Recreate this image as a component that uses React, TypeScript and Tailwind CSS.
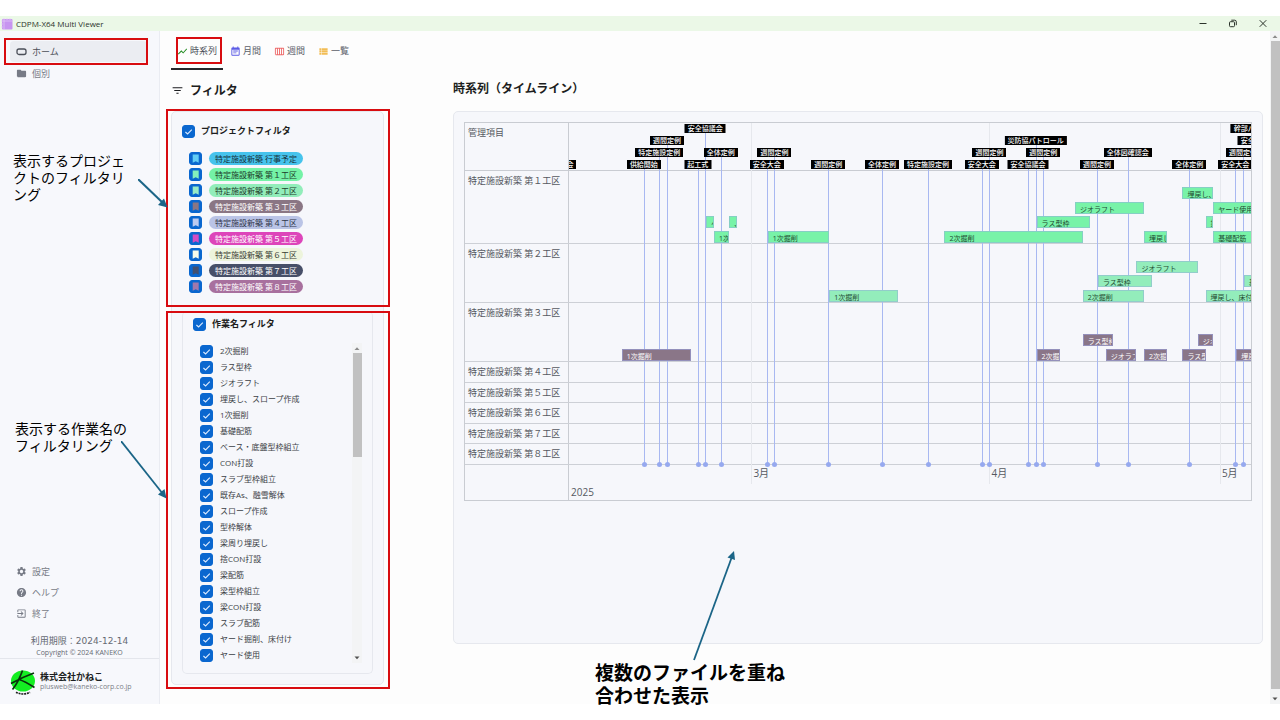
import { useState } from 'react';
import type { ReactNode } from 'react';
import {
  MdCalendarViewWeek,
  MdEventNote,
  MdExitToApp,
  MdFilterList,
  MdFolder,
  MdHelp,
  MdSettings,
  MdShowChart,
  MdViewList,
} from 'react-icons/md';

// Time axis, in days relative to March 1st
const AXIS_START = -23.75;
const AXIS_DAYS = 88.8;
const toPercent = (day: number) => ((day - AXIS_START) / AXIS_DAYS) * 100;

const projects = [
  { name: '特定施設新築 行事予定', chip: 'bg-[#46c3ec] text-[#17323c]', mark: 'text-[#62cdf5]' },
  { name: '特定施設新築 第１工区', chip: 'bg-[#74f2a6] text-[#1d3b2a]', mark: 'text-[#84f0bc]' },
  { name: '特定施設新築 第２工区', chip: 'bg-[#92edba] text-[#1d3b2a]', mark: 'text-[#98ebc6]' },
  { name: '特定施設新築 第３工区', chip: 'bg-[#8a7684] text-white', mark: 'text-[#8a7684]' },
  { name: '特定施設新築 第４工区', chip: 'bg-[#bac4e6] text-[#30364a]', mark: 'text-[#bccbf0]' },
  { name: '特定施設新築 第５工区', chip: 'bg-[#dd45ba] text-white', mark: 'text-[#d24cc4]' },
  { name: '特定施設新築 第６工区', chip: 'bg-[#edf4dc] text-[#3a3d34]', mark: 'text-[#f6fbea]' },
  { name: '特定施設新築 第７工区', chip: 'bg-[#474f68] text-white', mark: 'text-[#43506f]' },
  { name: '特定施設新築 第８工区', chip: 'bg-[#a8709e] text-white', mark: 'text-[#a078ac]' },
];

const works = [
  '2次掘削',
  'ラス型枠',
  'ジオラフト',
  '埋戻し、スロープ作成',
  '1次掘削',
  '基礎配筋',
  'ベース・底盤型枠組立',
  'CON打設',
  'スラブ型枠組立',
  '既存As、融雪解体',
  'スロープ作成',
  '型枠解体',
  '梁周り埋戻し',
  '捨CON打設',
  '梁配筋',
  '梁型枠組立',
  '梁CON打設',
  'スラブ配筋',
  'ヤード掘削、床付け',
  'ヤード使用',
];

const events = [
  { day: -25, lane: 3, name: '安全大会' },
  { day: -14, lane: 3, name: '供給開始' },
  { day: -12, lane: 2, name: '特定施設定例' },
  { day: -11, lane: 1, name: '週間定例' },
  { day: -7, lane: 3, name: '起工式' },
  { day: -6, lane: 0, name: '安全協議会' },
  { day: -4, lane: 2, name: '全体定例' },
  { day: 2, lane: 3, name: '安全大会' },
  { day: 3, lane: 2, name: '週間定例' },
  { day: 10, lane: 3, name: '週間定例' },
  { day: 17, lane: 3, name: '全体定例' },
  { day: 23, lane: 3, name: '特定施設定例' },
  { day: 30, lane: 3, name: '安全大会' },
  { day: 31, lane: 2, name: '週間定例' },
  { day: 36, lane: 3, name: '安全協議会' },
  { day: 37, lane: 1, name: '災防協パトロール' },
  { day: 38, lane: 2, name: '週間定例' },
  { day: 45, lane: 3, name: '週間定例' },
  { day: 49, lane: 2, name: '全体図確認会' },
  { day: 57, lane: 3, name: '全体定例' },
  { day: 63, lane: 3, name: '安全大会' },
  { day: 64, lane: 2, name: '週間定例' },
  { day: 66, lane: 1, name: '安全協議会' },
  { day: 66, lane: 0, name: '幹部パトロール' },
];

type Bar = { from: number; to: number; lane: number; name: string };

const groups: { name: string; height: string; color: string; bars: Bar[] }[] = [
  {
    name: '特定施設新築 第１工区',
    height: 'h-[73px]',
    color: 'border-[#86cfc4] bg-[#78f3a8] text-[#1d4a30]',
    bars: [
      { from: -5, to: -3, lane: 0, name: '1次' },
      { from: 2, to: 10, lane: 0, name: '1次掘削' },
      { from: 25, to: 43, lane: 0, name: '2次掘削' },
      { from: 51, to: 54, lane: 0, name: '埋戻し' },
      { from: 60, to: 70, lane: 0, name: '基礎配筋' },
      { from: -6, to: -5, lane: 1, name: 'ベ' },
      { from: -3, to: -2, lane: 1, name: '、' },
      { from: 37, to: 44, lane: 1, name: 'ラス型枠' },
      { from: 59, to: 60, lane: 1, name: '捨' },
      { from: 42, to: 51, lane: 2, name: 'ジオラフト' },
      { from: 60, to: 70, lane: 2, name: 'ヤード使用' },
      { from: 56, to: 60, lane: 3, name: '埋戻し、' },
    ],
  },
  {
    name: '特定施設新築 第２工区',
    height: 'h-[59px]',
    color: 'border-[#92cdca] bg-[#93edbb] text-[#1d4a30]',
    bars: [
      { from: 10, to: 19, lane: 0, name: '1次掘削' },
      { from: 43, to: 51, lane: 0, name: '2次掘削' },
      { from: 59, to: 70, lane: 0, name: '埋戻し、床付け' },
      { from: 45, to: 52, lane: 1, name: 'ラス型枠' },
      { from: 64, to: 70, lane: 1, name: '基' },
      { from: 50, to: 58, lane: 2, name: 'ジオラフト' },
    ],
  },
  {
    name: '特定施設新築 第３工区',
    height: 'h-[59px]',
    color: 'border-[#9490bb] bg-[#8a7688] text-white',
    bars: [
      { from: -17, to: -8, lane: 0, name: '1次掘削' },
      { from: 37, to: 40, lane: 0, name: '2次掘' },
      { from: 46, to: 50, lane: 0, name: 'ジオラフ' },
      { from: 51, to: 54, lane: 0, name: '2次掘' },
      { from: 56, to: 59, lane: 0, name: 'ラス型' },
      { from: 63, to: 70, lane: 0, name: '埋戻し' },
      { from: 43, to: 47, lane: 1, name: 'ラス型枠' },
      { from: 58, to: 60, lane: 1, name: 'ジオ' },
    ],
  },
  { name: '特定施設新築 第４工区', height: 'h-[21px]', color: '', bars: [] },
  { name: '特定施設新築 第５工区', height: 'h-[20px]', color: '', bars: [] },
  { name: '特定施設新築 第６工区', height: 'h-[21px]', color: '', bars: [] },
  { name: '特定施設新築 第７工区', height: 'h-[20px]', color: '', bars: [] },
  { name: '特定施設新築 第８工区', height: 'h-[21px]', color: '', bars: [] },
];

const months = [
  { day: 0, name: '3月' },
  { day: 31, name: '4月' },
  { day: 61, name: '5月' },
];

const eventLaneTop = ['top-px', 'top-[13px]', 'top-[25px]', 'top-[37px]'];
const lineTop = ['top-[10px]', 'top-[22px]', 'top-[34px]', 'top-[46px]'];
const barLaneBottom = ['bottom-0', 'bottom-[15px]', 'bottom-[29px]', 'bottom-[44px]'];

function RedBox({ className }: { className: string }) {
  return <div className={`pointer-events-none absolute z-20 border-2 border-[#d80c10] ${className}`} />;
}

function CheckBox({ label, children }: { label: string; children?: ReactNode }) {
  const [checked, setChecked] = useState(true);

  return (
    <span className="relative block h-[13px] w-[13px] shrink-0">
      <input
        type="checkbox"
        aria-label={label}
        checked={checked}
        onChange={(e) => setChecked(e.target.checked)}
        className="block h-[13px] w-[13px] appearance-none rounded-[3px] border border-[#0a67cf] bg-white checked:bg-[#0a67cf]"
      />
      {children ??
        (checked && (
          <svg viewBox="0 0 13 13" className="pointer-events-none absolute inset-0" fill="none">
            <path d="M3.4 7 5.6 9 9.8 4.7" stroke="#dcebff" strokeWidth="1.1" />
          </svg>
        ))}
    </span>
  );
}

function ScrollBar({ thumb }: { thumb: string }) {
  return (
    <div className="flex w-[10px] shrink-0 flex-col items-center bg-[#f3f4f5]">
      <svg viewBox="0 0 10 10" className="h-[10px] w-[10px] shrink-0">
        <path d="M2.5 7 5 4.2 7.5 7z" fill="#8b8b8b" />
      </svg>
      <div className={`w-[9px] bg-[#c1c1c1] ${thumb}`} />
      <svg viewBox="0 0 10 10" className="mt-auto h-[10px] w-[10px] shrink-0">
        <path d="M2.5 3.5 5 6.3 7.5 3.5z" fill="#505050" />
      </svg>
    </div>
  );
}

function TitleBar() {
  return (
    <header className="flex h-[15px] items-center bg-[#ebf8e7] text-[#2b332b]">
      <svg viewBox="0 0 12 12" className="ml-px mr-[3px] h-3 w-3">
        <rect x="1" y="1" width="10.5" height="10.5" rx="1" fill="#c795f0" />
        <path d="M3 0v12M0 3h12M0 6h2M0 9h2M6 0v2M9 0v2" stroke="#e4caf8" strokeWidth=".7" />
      </svg>
      <h1 className="text-[8px]">CDPM-X64 Multi Viewer</h1>
      <div className="ml-auto flex gap-5 pr-3">
        <button aria-label="最小化">
          <svg viewBox="0 0 10 10" className="h-[10px] w-[10px]" fill="none" stroke="currentColor">
            <path d="M1.5 4.5h7" />
          </svg>
        </button>
        <button aria-label="元に戻す">
          <svg viewBox="0 0 10 10" className="h-[10px] w-[10px]" fill="none" stroke="currentColor">
            <rect x="1.5" y="2.7" width="5" height="5" rx="1" />
            <path d="M3.3 1.2h3.4a1.6 1.6 0 0 1 1.6 1.6v3.4" />
          </svg>
        </button>
        <button aria-label="閉じる">
          <svg viewBox="0 0 10 10" className="h-[10px] w-[10px]" fill="none" stroke="currentColor">
            <path d="m1.7 1.2 6.6 6.6M8.3 1.2 1.7 7.8" />
          </svg>
        </button>
      </div>
    </header>
  );
}

function NavItem({ icon, label, active }: { icon: ReactNode; label: string; active?: boolean }) {
  return (
    <a
      href="#"
      className={
        active
          ? 'relative mr-3 ml-[10px] flex h-[21px] items-center gap-[5px] rounded bg-[#ebedf2] pl-[6px] text-[9px] text-[#4b4f58]'
          : 'mr-3 ml-[10px] flex h-[21px] items-center gap-[5px] pl-[6px] text-[9px] text-[#777b86]'
      }
    >
      {icon}
      {label}
      {active && <RedBox className="-inset-y-[3px] -left-[6px] -right-px" />}
    </a>
  );
}

function Sidebar() {
  return (
    <aside className="flex w-[160px] shrink-0 flex-col border-r border-[#eaecf2] bg-[#f7f8fc] pt-[10px]">
      <nav className="flex flex-col gap-px">
        <NavItem
          active
          label="ホーム"
          icon={
            <svg viewBox="0 0 11 11" className="h-[11px] w-[11px]" fill="none" stroke="#4a4e58" strokeWidth="1.3">
              <rect x="1" y="3" width="9" height="5.5" rx="2" />
            </svg>
          }
        />
        <NavItem label="個別" icon={<MdFolder size={11} />} />
      </nav>
      <nav className="mt-auto mb-[11px]">
        <NavItem label="設定" icon={<MdSettings size={11} />} />
        <NavItem label="ヘルプ" icon={<MdHelp size={11} />} />
        <NavItem label="終了" icon={<MdExitToApp size={11} />} />
      </nav>
      <div className="text-center text-[#666a73]">
        <p className="font-['DejaVu_Sans','Noto_Sans_CJK_JP',sans-serif] text-[9px] leading-[13px]">
          利用期限：2024-12-14
        </p>
        <p className="text-[7px] leading-[10px]">Copyright © 2024 KANEKO</p>
      </div>
      <div className="flex h-[46px] items-center gap-[5px] border-t border-[#e4e6ec] pl-[10px]">
        <svg viewBox="0 0 25 26" className="h-[26px] w-[25px]">
          <ellipse cx="13" cy="12" rx="12" ry="10.5" fill="#14ee22" />
          <path
            d="M12.500 1.500C10 8.500 7 15 2.500 20.500M24 4C17 6.500 9 10 1 14.500M9 10.500C14 12 19 15 24.500 18.500"
            fill="none"
            stroke="#0b300d"
            strokeWidth="1.7"
          />
          <path d="M6 23.200C10 25.500 16 25.500 20 23.200" fill="none" stroke="#222" strokeWidth="1.6" strokeDasharray="2 .8" />
        </svg>
        <div>
          <p className="text-[9px] leading-[11px] font-bold text-[#1d1f23]">株式会社かねこ</p>
          <p className="text-[7px] leading-[10px] text-[#7b7f88]">plusweb@kaneko-corp.co.jp</p>
        </div>
      </div>
    </aside>
  );
}

function Tab({ icon, label, active }: { icon: ReactNode; label: string; active?: boolean }) {
  return (
    <button
      role="tab"
      aria-selected={!!active}
      className={
        active
          ? 'relative flex items-center gap-[2px] border-b-2 border-[#25272b] px-[6px] pt-[3px] text-[9px] text-[#4c5058]'
          : 'flex items-center gap-[2px] border-b-2 border-transparent px-[6px] pt-[3px] text-[9px] text-[#5c606a]'
      }
    >
      {icon}
      {label}
      {active && <RedBox className="top-[6px] right-px bottom-1 left-[5px]" />}
    </button>
  );
}

function FilterPanel() {
  return (
    <section className="w-[213px] shrink-0">
      <h2 className="flex h-[41px] items-center gap-[6px] text-[12px] font-bold text-[#1c1d20]">
        <MdFilterList size={13} />
        フィルタ
      </h2>

      <div className="rounded-[5px] border border-[#e6e8ee] bg-[#f6f7fb] px-[10px] pt-[9px] pb-[10px]">
        {/* Projects */}
        <div className="relative">
          <div className="flex h-5 items-center gap-[6px]">
            <CheckBox label="プロジェクトフィルタ" />
            <h3 className="text-[9px] font-bold text-[#1c1d20]">プロジェクトフィルタ</h3>
          </div>
          <ul className="mt-[9px] pl-[7px]">
            {projects.map((project) => (
              <li key={project.name} className="flex h-4 items-center gap-[7px]">
                <CheckBox label={project.name}>
                  <svg viewBox="0 0 13 13" className={`pointer-events-none absolute inset-0 ${project.mark}`}>
                    <path d="M3.700 2.500h6v8.200l-3-1.400-3 1.400z" fill="currentColor" />
                  </svg>
                </CheckBox>
                <span className={`rounded-full px-[6px] text-[8px] leading-[13px] ${project.chip}`}>{project.name}</span>
              </li>
            ))}
          </ul>
          <RedBox className="-top-3 -right-[17px] -bottom-[13px] -left-4" />
        </div>

        {/* Works */}
        <div className="relative mt-[17px] rounded-[5px] border border-t-0 border-[#e6e8ee] px-[10px] pt-[3px] pb-[10px]">
          <div className="flex h-5 items-center gap-[6px]">
            <CheckBox label="作業名フィルタ" />
            <h3 className="text-[9px] font-bold text-[#1c1d20]">作業名フィルタ</h3>
          </div>
          <div className="mt-[9px] flex">
            <ul className="flex-1 pl-[7px]">
              {works.map((work) => (
                <li key={work} className="flex h-4 items-center gap-[7px] text-[8px] text-[#3c3f46]">
                  <CheckBox label={work} />
                  {work}
                </li>
              ))}
            </ul>
            <ScrollBar thumb="h-[104px]" />
          </div>
          <RedBox className="top-0 -right-[18px] -bottom-4 -left-[17px]" />
        </div>
      </div>
    </section>
  );
}

function Timeline() {
  return (
    <div className="relative border border-[#c9ccd2] text-[9px] text-[#555961]">
      {/* Vertical lines, behind the bars */}
      <div className="absolute inset-y-0 right-0 left-[104px] overflow-hidden">
        {months.map((month) => (
          <div
            key={month.name}
            className="absolute top-0 bottom-4 w-px bg-[#e6e8ed]"
            style={{ left: `${toPercent(month.day)}%` }}
          />
        ))}
        {events.map((event, i) => (
          <div
            key={i}
            className={`absolute bottom-[35px] w-px bg-[#a8b8f1] ${lineTop[event.lane]}`}
            style={{ left: `${toPercent(event.day)}%` }}
          >
            <div className="absolute -bottom-[2px] -left-[2px] z-10 h-[5px] w-[5px] rounded-full bg-[#96a9ef]" />
          </div>
        ))}
      </div>

      <div className="flex h-[48px] border-b border-[#c9ccd2]">
        <div className="w-[104px] shrink-0 border-r border-[#c9ccd2] pt-[3px] pl-[3px]">管理項目</div>
        <div className="relative flex-1 overflow-hidden">
          {events.map((event, i) => (
            <div
              key={i}
              className={`absolute h-[9px] -translate-x-1/2 bg-black px-[3px] text-[7px] leading-[9px] font-medium whitespace-nowrap text-white ${eventLaneTop[event.lane]}`}
              style={{ left: `${toPercent(event.day)}%` }}
            >
              {event.name}
            </div>
          ))}
        </div>
      </div>

      {groups.map((group) => (
        <div key={group.name} className={`flex border-b border-[#cdd0d6] ${group.height}`}>
          <div className="w-[104px] shrink-0 border-r border-[#c9ccd2] pt-[3px] pl-[3px] whitespace-nowrap">
            {group.name}
          </div>
          <div className="relative flex-1 overflow-hidden">
            {group.bars.map((bar) => (
              <div
                key={`${bar.from}-${bar.lane}`}
                className={`absolute ml-px h-3 overflow-hidden border pl-1 text-[7px] leading-[13px] whitespace-nowrap ${group.color} ${barLaneBottom[bar.lane]}`}
                style={{ left: `${toPercent(bar.from)}%`, width: `${((bar.to - bar.from) / AXIS_DAYS) * 100}%` }}
              >
                {bar.name}
              </div>
            ))}
          </div>
        </div>
      ))}

      {/* Axis */}
      <div className="flex h-[35px]">
        <div className="w-[104px] shrink-0 border-r border-[#c9ccd2]" />
        <div className="relative flex-1 overflow-hidden text-[10px] leading-[16px]">
          {months.map((month) => (
            <span
              key={month.name}
              className="absolute top-0 pl-[2px] whitespace-nowrap"
              style={{ left: `${toPercent(month.day)}%` }}
            >
              {month.name}
            </span>
          ))}
          <span className="absolute bottom-0 left-[2px]">2025</span>
        </div>
      </div>
    </div>
  );
}

function Callouts() {
  return (
    <div className="pointer-events-none text-black">
      <p className="absolute top-[152px] left-[13px] z-30 text-[14px] leading-[17px]">
        表示するプロジェ
        <br />
        クトのフィルタリ
        <br />
        ング
      </p>
      <svg viewBox="0 0 30 29" className="absolute top-[179px] left-[138px] z-30 h-[29px] w-[30px]">
        <path d="M0 0 25 24" stroke="#1b6587" strokeWidth="2" />
        <path d="M29.500 28.500 20 26 26 19.500z" fill="#1b6587" />
      </svg>

      <p className="absolute top-[420px] left-[15px] z-30 text-[14px] leading-[17px]">
        表示する作業名の
        <br />
        フィルタリング
      </p>
      <svg viewBox="0 0 46 58" className="absolute top-[441px] left-[121px] z-30 h-[58px] w-[46px]">
        <path d="M0 0 42 53" stroke="#1b6587" strokeWidth="1.8" />
        <path d="M45.500 57.500 37 53.500 43.500 48z" fill="#1b6587" />
      </svg>

      <p className="absolute top-[662px] left-[595px] z-30 text-[19px] leading-[23px] font-bold">
        複数のファイルを重ね
        <br />
        合わせた表示
      </p>
      <svg viewBox="0 0 44 110" className="absolute top-[551px] left-[693px] z-30 h-[110px] w-[44px]">
        <path d="M1 109 38.500 7" stroke="#1b6587" strokeWidth="1.8" />
        <path d="M41 0 42 9 34.500 6.500z" fill="#1b6587" />
      </svg>
    </div>
  );
}

export default function App() {
  return (
    <div className="relative flex min-h-screen flex-col bg-white py-4 font-['Open_Sans','Noto_Sans_CJK_JP',sans-serif]">
      <TitleBar />

      <div className="flex flex-1">
        <Sidebar />

        <main className="flex min-w-0 flex-1 flex-col bg-[#fdfdfd] pr-[7px] pl-[11px]">
          <div role="tablist" className="flex h-[39px] gap-px">
            <Tab active label="時系列" icon={<MdShowChart size={11} color="#1f8a1f" />} />
            <Tab label="月間" icon={<MdEventNote size={11} color="#5b5be6" />} />
            <Tab label="週間" icon={<MdCalendarViewWeek size={11} color="#ee6a6a" />} />
            <Tab label="一覧" icon={<MdViewList size={11} color="#f2bd55" />} />
          </div>

          <div className="flex flex-1 gap-[69px]">
            <FilterPanel />

            <section className="flex min-w-0 flex-1 flex-col pb-[60px]">
              <h2 className="flex h-[41px] items-center pb-[3px] text-[12px] font-bold text-[#1c1d20]">
                時系列（タイムライン）
              </h2>
              <div className="flex-1 rounded-[5px] border border-[#e6e8ee] bg-[#f6f7fb] p-[10px]">
                <Timeline />
              </div>
            </section>
          </div>
        </main>

        <ScrollBar thumb="flex-1 mb-[5px]" />
      </div>

      <Callouts />
    </div>
  );
}
